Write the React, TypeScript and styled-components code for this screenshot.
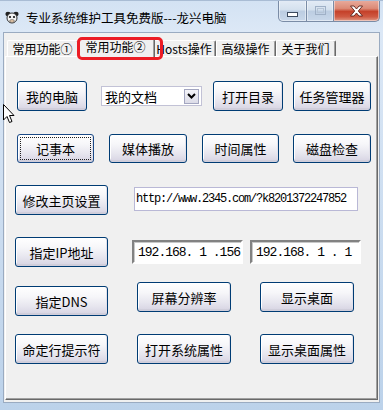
import React from 'react';
import styled, { createGlobalStyle } from 'styled-components';

const GlobalStyle = createGlobalStyle`
  html, body {
    margin: 0;
    padding: 0;
    background: #ffffff;
  }
  body {
    width: 383px;
    height: 410px;
    overflow: hidden;
    font-family: "Noto Sans CJK SC", "Liberation Sans", sans-serif;
  }
`;

// Window chrome
const Window = styled.div`
  position: relative;
  width: 383px;
  height: 410px;
  box-sizing: border-box;
  background: linear-gradient(180deg, #d3e2f3 0%, #dce8f6 30px, #c9dbef 60%, #bcd2ea 100%);
  border-top: 1px solid #a9bcd4;
  display: flex;
  flex-direction: column;
  overflow: hidden;
`;

const TitleBar = styled.div`
  height: 31px;
  display: flex;
  align-items: flex-start;
`;

const TitleIcon = styled.svg`
  margin: 9px 0 0 5px;
  flex: none;
`;

const TitleText = styled.div`
  margin: 8px 0 0 7px;
  font-size: 12.5px;
  line-height: 18px;
  color: #000;
  white-space: nowrap;
  font-family: "Noto Sans CJK SC", sans-serif;
`;

const Captions = styled.div`
  margin-left: auto;
  margin-right: 3px;
  margin-top: -1px;
  display: flex;
  height: 22px;
`;

const CapBtn = styled.div<{ $w: number; $kind?: 'close' | 'min' | 'max' }>`
  width: ${({ $w }) => $w}px;
  height: 22px;
  box-sizing: border-box;
  display: flex;
  align-items: center;
  justify-content: center;
  border: 1px solid #7a8ca6;
  border-top: none;
  border-left-width: ${({ $kind }) => ($kind === 'min' ? 1 : 0)}px;
  border-radius: ${({ $kind }) =>
    $kind === 'min' ? '0 0 0 5px' : $kind === 'close' ? '0 0 5px 0' : '0'};
  background: ${({ $kind }) =>
    $kind === 'close'
      ? 'linear-gradient(180deg, #e9ad9f 0%, #dc8a76 40%, #c5412a 55%, #cf5a43 80%, #e09a86 100%)'
      : 'linear-gradient(180deg, #e4ecf6 0%, #d5e1ee 45%, #bccde2 55%, #c9d8ea 100%)'};
  box-shadow: inset 0 0 0 1px rgba(255, 255, 255, 0.45);
`;

// Client area & tabs
const Client = styled.div`
  position: relative;
  margin: 0 3px 7px 3px;
  flex: 1;
  background: #f0f0f0;
  border: 1px solid #9aabc1;
  display: flex;
  flex-direction: column;
`;

const TabStrip = styled.div`
  position: relative;
  height: 23px;
  display: flex;
  align-items: flex-end;
  padding-left: 3px;
  z-index: 2;
`;

const Tab = styled.div<{ $w: number; $active?: boolean }>`
  width: ${({ $w }) => $w}px;
  height: ${({ $active }) => ($active ? 19 : 16)}px;
  box-sizing: border-box;
  margin: ${({ $active }) => ($active ? '0 -2px -1px -2px' : '0')};
  position: relative;
  z-index: ${({ $active }) => ($active ? 2 : 1)};
  background: #f0f0f0;
  border-top: 1px solid #ffffff;
  border-left: 1px solid #ffffff;
  border-right: 1px solid #696969;
  box-shadow: inset -1px 0 0 #a0a0a0;
  border-radius: 2px 2px 0 0;
  display: flex;
  align-items: ${({ $active }) => ($active ? 'flex-start' : 'center')};
  justify-content: center;
  padding-right: 1px;
  font-size: 12px;
  line-height: 15px;
  color: #000;
  white-space: nowrap;
`;

const Highlight = styled.div`
  position: absolute;
  left: 73px;
  top: 4px;
  width: 86px;
  height: 23px;
  box-sizing: border-box;
  border: 3px solid #ec1c24;
  border-radius: 5px;
  pointer-events: none;
  z-index: 4;
`;

const Panel = styled.div`
  margin: 0 1px;
  height: 344px;
  box-sizing: border-box;
  border: 1px solid;
  border-color: #ffffff #696969 #696969 #ffffff;
  box-shadow: inset -1px -1px 0 #a0a0a0;
  background: #f0f0f0;
  padding-left: 1px;
`;

const Row = styled.div<{ $top: number; $left: number; $align?: string }>`
  display: flex;
  align-items: ${({ $align }) => $align || 'center'};
  margin-top: ${({ $top }) => $top}px;
  padding-left: ${({ $left }) => $left}px;
`;

const Button = styled.div<{ $w: number; $h?: number; $ml?: number; $mt?: number; $focus?: boolean }>`
  position: relative;
  width: ${({ $w }) => $w}px;
  height: ${({ $h }) => $h || 30}px;
  margin-left: ${({ $ml }) => $ml || 0}px;
  margin-top: ${({ $mt }) => $mt || 0}px;
  flex: none;
  box-sizing: border-box;
  border: 1px solid ${({ $focus }) => ($focus ? '#1a4a86' : '#003c74')};
  border-radius: 3px;
  background: linear-gradient(180deg, #ffffff 0%, #f6f6f9 35%, #e6e5ee 70%, #d6d3e2 100%);
  box-shadow: inset 0 -2px 0 #d0cedb, inset -1px 0 0 #e2e1ea, inset 1px 1px 0 #ffffff;
  display: flex;
  align-items: center;
  justify-content: center;
  font-size: 13px;
  color: #000;
  white-space: nowrap;

  &::after {
    content: '';
    display: ${({ $focus }) => ($focus ? 'block' : 'none')};
    position: absolute;
    inset: 2px;
    border: 1px dotted #202020;
  }
`;

const Combo = styled.div<{ $w: number; $ml: number }>`
  width: ${({ $w }) => $w}px;
  height: 20px;
  margin-left: ${({ $ml }) => $ml}px;
  box-sizing: border-box;
  flex: none;
  border: 1px solid #c2c2d6;
  background: #ffffff;
  display: flex;
  align-items: center;
  padding: 0 2px 0 3px;
  font-size: 13px;
  color: #000;
`;

const ComboLabel = styled.span`
  flex: 1;
  white-space: nowrap;
`;

const DropButton = styled.div`
  width: 15px;
  height: 15px;
  box-sizing: border-box;
  border: 1px solid #a3a6c0;
  background: linear-gradient(180deg, #f4f4f8 0%, #dcdce8 100%);
  display: flex;
  align-items: center;
  justify-content: center;
`;

const TextBox = styled.div<{ $w: number; $ml: number }>`
  width: ${({ $w }) => $w}px;
  height: 24px;
  margin-left: ${({ $ml }) => $ml}px;
  margin-top: -2px;
  flex: none;
  box-sizing: border-box;
  border: 1px solid #b9b8d6;
  background: #ffffff;
  display: flex;
  align-items: center;
  padding-left: 1px;
  font-family: "Liberation Mono", "DejaVu Sans Mono", monospace;
  font-size: 12px;
  letter-spacing: -1.2px;
  color: #000;
  white-space: nowrap;
  overflow: hidden;
`;

const IpBox = styled.div<{ $w: number; $ml: number }>`
  width: ${({ $w }) => $w}px;
  height: 24px;
  margin-left: ${({ $ml }) => $ml}px;
  flex: none;
  box-sizing: border-box;
  border: 2px solid;
  border-color: #828282 #ffffff #ffffff #828282;
  box-shadow: inset 1px 1px 0 #c8c8c8;
  background: #ffffff;
  display: flex;
  align-items: center;
  padding-left: 4px;
  font-family: "Liberation Mono", "DejaVu Sans Mono", monospace;
  font-size: 13px;
  letter-spacing: -1px;
  color: #000;
  white-space: pre;
  overflow: hidden;
`;

const Cursor = styled.svg`
  position: absolute;
  left: 3px;
  top: 103px;
  z-index: 5;
`;

const App: React.FC = () => {
  return (
    <>
      <GlobalStyle />
      <Window>
        <TitleBar>
          <TitleIcon width="14" height="14" viewBox="0 0 14 14">
            <ellipse cx="3" cy="4" rx="2.6" ry="2.2" fill="#222" />
            <ellipse cx="11" cy="4" rx="2.6" ry="2.2" fill="#222" />
            <ellipse cx="7" cy="8" rx="5" ry="5" fill="#f4f4f4" stroke="#333" strokeWidth="1" />
            <circle cx="5" cy="7" r="1.1" fill="#111" />
            <circle cx="9" cy="7" r="1.1" fill="#111" />
            <ellipse cx="7" cy="11" rx="2.4" ry="1.4" fill="#e9c9a8" stroke="#555" strokeWidth="0.6" />
          </TitleIcon>
          <TitleText>专业系统维护工具免费版---龙兴电脑</TitleText>
          <Captions>
            <CapBtn $w={29} $kind="min">
              <svg width="11" height="5" viewBox="0 0 11 5" style={{ marginTop: 7 }}>
                <rect x="0.5" y="0.5" width="10" height="4" fill="#ffffff" stroke="#3c4a5e" />
              </svg>
            </CapBtn>
            <CapBtn $w={27} $kind="max">
              <svg width="11" height="9" viewBox="0 0 11 9">
                <rect x="0.5" y="0.5" width="10" height="8" fill="none" stroke="#9fb0c6" />
                <rect x="2.5" y="2.5" width="6" height="4" fill="none" stroke="#b5c4d6" />
              </svg>
            </CapBtn>
            <CapBtn $w={46} $kind="close">
              <svg width="15" height="12" viewBox="0 0 15 12">
                <path
                  d="M1.5 1 L5 1 L7.5 4 L10 1 L13.5 1 L9.3 6 L13.5 11 L10 11 L7.5 8 L5 11 L1.5 11 L5.7 6 Z"
                  fill="#ffffff"
                  stroke="#5a1f18"
                  strokeWidth="0.9"
                  strokeLinejoin="round"
                />
              </svg>
            </CapBtn>
          </Captions>
        </TitleBar>

        <Client>
          <TabStrip>
            <Tab $w={72}>常用功能①</Tab>
            <Tab $w={78} $active>常用功能②</Tab>
            <Tab $w={63}>Hosts操作</Tab>
            <Tab $w={60}>高级操作</Tab>
            <Tab $w={60}>关于我们</Tab>
            <Highlight />
          </TabStrip>

          <Panel>
            <Row $top={24} $left={10}>
              <Button $w={70}>我的电脑</Button>
              <Combo $w={101} $ml={14}>
                <ComboLabel>我的文档</ComboLabel>
                <DropButton>
                  <svg width="9" height="6" viewBox="0 0 9 6">
                    <path d="M1 1 L4.5 4.5 L8 1" fill="none" stroke="#000" strokeWidth="2" />
                  </svg>
                </DropButton>
              </Combo>
              <Button $w={70} $ml={11}>打开目录</Button>
              <Button $w={78} $ml={10}>任务管理器</Button>
            </Row>

            <Row $top={23} $left={10}>
              <Button $w={77} $h={29} $focus>记事本</Button>
              <Button $w={78} $h={29} $ml={15}>媒体播放</Button>
              <Button $w={77} $h={29} $ml={15}>时间属性</Button>
              <Button $w={78} $h={29} $ml={14}>磁盘检查</Button>
            </Row>

            <Row $top={22} $left={8}>
              <Button $w={93}>修改主页设置</Button>
              <TextBox $w={224} $ml={26}>http://www.2345.com/?k8201372247852</TextBox>
            </Row>

            <Row $top={22} $left={8}>
              <Button $w={93}>指定IP地址</Button>
              <IpBox $w={111} $ml={24}>192.168. 1 .156</IpBox>
              <IpBox $w={111} $ml={7}>192.168. 1 . 1</IpBox>
            </Row>

            <Row $top={15} $left={8} $align="flex-start">
              <Button $w={93} $mt={4}>指定DNS</Button>
              <Button $w={94} $ml={29}>屏幕分辨率</Button>
              <Button $w={94} $ml={29}>显示桌面</Button>
            </Row>

            <Row $top={18} $left={8}>
              <Button $w={93}>命定行提示符</Button>
              <Button $w={94} $ml={29}>打开系统属性</Button>
              <Button $w={94} $ml={29}>显示桌面属性</Button>
            </Row>
          </Panel>
        </Client>

        <Cursor width="12" height="20" viewBox="0 0 12 20">
          <path
            d="M0.5 0.5 L0.5 16 L4 12.5 L6.5 18.5 L9 17.5 L6.5 11.5 L11 11.5 Z"
            fill="#ffffff"
            stroke="#000000"
            strokeWidth="1"
            strokeLinejoin="miter"
          />
        </Cursor>
      </Window>
    </>
  );
};

export default App;
